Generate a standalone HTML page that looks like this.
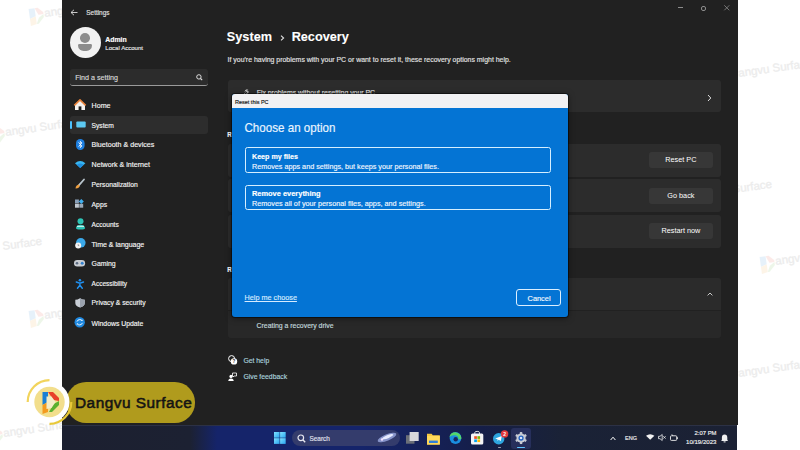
<!DOCTYPE html>
<html><head><meta charset="utf-8">
<style>
*{margin:0;padding:0;box-sizing:border-box}
html,body{width:800px;height:450px;overflow:hidden;background:#fff;font-family:"Liberation Sans",sans-serif;position:relative}
.a{position:absolute}
.t{position:absolute;white-space:nowrap;line-height:1;-webkit-text-stroke:0.15px currentColor}
.btn{position:absolute;background:#373737;border-radius:3px;color:#fff;font-size:7.3px;text-align:center}
svg{overflow:visible}
</style></head><body>
<div class="a" style="left:30px;top:7.699999999999999px;width:110px;height:20px;transform:rotate(-8deg);transform-origin:0 11px"><svg class="a" style="left:0;top:0" width="14" height="18" viewBox="0 0 14 18" opacity="0.1"><path d="M0 1L6 1L6 9L0 11Z" fill="#1a7fd4"/><path d="M6 1L9 1L14 6L14 8L9 8Z" fill="#e8402a"/><path d="M14 8L14 11L8 17L6 17L9 11Z" fill="#5ab030"/><path d="M0 11L6 9L6 17L0 18Z" fill="#f39a1e"/></svg><div class="t" style="left:15px;top:1.5px;font-size:11.5px;color:#ececec;-webkit-text-stroke:0.3px #ececec">angvu Surface</div></div>
<div class="a" style="left:-9px;top:126.80000000000001px;width:110px;height:20px;transform:rotate(-8deg);transform-origin:0 11px"><svg class="a" style="left:0;top:0" width="14" height="18" viewBox="0 0 14 18" opacity="0.1"><path d="M0 1L6 1L6 9L0 11Z" fill="#1a7fd4"/><path d="M6 1L9 1L14 6L14 8L9 8Z" fill="#e8402a"/><path d="M14 8L14 11L8 17L6 17L9 11Z" fill="#5ab030"/><path d="M0 11L6 9L6 17L0 18Z" fill="#f39a1e"/></svg><div class="t" style="left:15px;top:1.5px;font-size:11.5px;color:#ececec;-webkit-text-stroke:0.3px #ececec">angvu Surface</div></div>
<div class="a" style="left:-45.6px;top:245.60000000000002px;width:110px;height:20px;transform:rotate(-8deg);transform-origin:0 11px"><svg class="a" style="left:0;top:0" width="14" height="18" viewBox="0 0 14 18" opacity="0.1"><path d="M0 1L6 1L6 9L0 11Z" fill="#1a7fd4"/><path d="M6 1L9 1L14 6L14 8L9 8Z" fill="#e8402a"/><path d="M14 8L14 11L8 17L6 17L9 11Z" fill="#5ab030"/><path d="M0 11L6 9L6 17L0 18Z" fill="#f39a1e"/></svg><div class="t" style="left:15px;top:1.5px;font-size:11.5px;color:#ececec;-webkit-text-stroke:0.3px #ececec">angvu Surface</div></div>
<div class="a" style="left:30px;top:310px;width:110px;height:20px;transform:rotate(-8deg);transform-origin:0 11px"><svg class="a" style="left:0;top:0" width="14" height="18" viewBox="0 0 14 18" opacity="0.1"><path d="M0 1L6 1L6 9L0 11Z" fill="#1a7fd4"/><path d="M6 1L9 1L14 6L14 8L9 8Z" fill="#e8402a"/><path d="M14 8L14 11L8 17L6 17L9 11Z" fill="#5ab030"/><path d="M0 11L6 9L6 17L0 18Z" fill="#f39a1e"/></svg><div class="t" style="left:15px;top:1.5px;font-size:11.5px;color:#ececec;-webkit-text-stroke:0.3px #ececec">angvu Surface</div></div>
<div class="a" style="left:-11px;top:428px;width:110px;height:20px;transform:rotate(-8deg);transform-origin:0 11px"><svg class="a" style="left:0;top:0" width="14" height="18" viewBox="0 0 14 18" opacity="0.1"><path d="M0 1L6 1L6 9L0 11Z" fill="#1a7fd4"/><path d="M6 1L9 1L14 6L14 8L9 8Z" fill="#e8402a"/><path d="M14 8L14 11L8 17L6 17L9 11Z" fill="#5ab030"/><path d="M0 11L6 9L6 17L0 18Z" fill="#f39a1e"/></svg><div class="t" style="left:15px;top:1.5px;font-size:11.5px;color:#ececec;-webkit-text-stroke:0.3px #ececec">angvu Surface</div></div>
<div class="a" style="left:724px;top:67.7px;width:110px;height:20px;transform:rotate(-8deg);transform-origin:0 11px"><svg class="a" style="left:0;top:0" width="14" height="18" viewBox="0 0 14 18" opacity="0.1"><path d="M0 1L6 1L6 9L0 11Z" fill="#1a7fd4"/><path d="M6 1L9 1L14 6L14 8L9 8Z" fill="#e8402a"/><path d="M14 8L14 11L8 17L6 17L9 11Z" fill="#5ab030"/><path d="M0 11L6 9L6 17L0 18Z" fill="#f39a1e"/></svg><div class="t" style="left:15px;top:1.5px;font-size:11.5px;color:#ececec;-webkit-text-stroke:0.3px #ececec">angvu Surface</div></div>
<div class="a" style="left:684px;top:189.2px;width:110px;height:20px;transform:rotate(-8deg);transform-origin:0 11px"><svg class="a" style="left:0;top:0" width="14" height="18" viewBox="0 0 14 18" opacity="0.1"><path d="M0 1L6 1L6 9L0 11Z" fill="#1a7fd4"/><path d="M6 1L9 1L14 6L14 8L9 8Z" fill="#e8402a"/><path d="M14 8L14 11L8 17L6 17L9 11Z" fill="#5ab030"/><path d="M0 11L6 9L6 17L0 18Z" fill="#f39a1e"/></svg><div class="t" style="left:15px;top:1.5px;font-size:11.5px;color:#ececec;-webkit-text-stroke:0.3px #ececec">angvu Surface</div></div>
<div class="a" style="left:761px;top:255.60000000000002px;width:110px;height:20px;transform:rotate(-8deg);transform-origin:0 11px"><svg class="a" style="left:0;top:0" width="14" height="18" viewBox="0 0 14 18" opacity="0.1"><path d="M0 1L6 1L6 9L0 11Z" fill="#1a7fd4"/><path d="M6 1L9 1L14 6L14 8L9 8Z" fill="#e8402a"/><path d="M14 8L14 11L8 17L6 17L9 11Z" fill="#5ab030"/><path d="M0 11L6 9L6 17L0 18Z" fill="#f39a1e"/></svg><div class="t" style="left:15px;top:1.5px;font-size:11.5px;color:#ececec;-webkit-text-stroke:0.3px #ececec">angvu Surface</div></div>
<div class="a" style="left:724px;top:368px;width:110px;height:20px;transform:rotate(-8deg);transform-origin:0 11px"><svg class="a" style="left:0;top:0" width="14" height="18" viewBox="0 0 14 18" opacity="0.1"><path d="M0 1L6 1L6 9L0 11Z" fill="#1a7fd4"/><path d="M6 1L9 1L14 6L14 8L9 8Z" fill="#e8402a"/><path d="M14 8L14 11L8 17L6 17L9 11Z" fill="#5ab030"/><path d="M0 11L6 9L6 17L0 18Z" fill="#f39a1e"/></svg><div class="t" style="left:15px;top:1.5px;font-size:11.5px;color:#ececec;-webkit-text-stroke:0.3px #ececec">angvu Surface</div></div>
<div class="a" style="left:62px;top:0px;width:676.00px;height:425.00px;background:#212121"></div>
<svg class="a" style="left:70px;top:9px" width="8" height="7" viewBox="0 0 8 7"><path d="M7.5 3.5H1M4 0.8L1 3.5L4 6.2" stroke="#ddd" stroke-width="0.9" fill="none"/></svg>
<div class="t" style="left:86.32px;top:9.68px;font-size:6.4px;color:#e0e0e0;font-weight:normal;">Settings</div>
<div class="a" style="left:678.2px;top:7.3px;width:5.20px;height:0.90px;background:#8c8c8c"></div>
<div class="a" style="left:700.8px;top:5.5px;width:5.20px;height:5.20px;border:1.2px solid #8c8c8c;border-radius:2px"></div>
<svg class="a" style="left:723.6px;top:5.4px" width="5.6" height="5.6" viewBox="0 0 5.6 5.6"><path d="M0.3 0.3L5.3 5.3M5.3 0.3L0.3 5.3" stroke="#8c8c8c" stroke-width="0.8"/></svg>
<div class="a" style="left:69.7px;top:27.3px;width:31.00px;height:31.00px;background:#f2f2f2;border-radius:50%"></div>
<div class="a" style="left:80.2px;top:33.2px;width:10.00px;height:9.50px;background:#8c8c8c;border-radius:50%"></div>
<div class="a" style="left:78px;top:44px;width:14.40px;height:6.80px;background:#8c8c8c;border-radius:2px 2px 8px 8px"></div>
<div class="t" style="left:105.29px;top:36.56px;font-size:6.9px;color:#fff;font-weight:bold;">Admin</div>
<div class="t" style="left:105.34px;top:45.28px;font-size:6.05px;color:#e6e6e6;font-weight:normal;">Local Account</div>
<div class="a" style="left:70px;top:69px;width:138.40px;height:17.00px;background:#2c2c2c;border-radius:3px;border-bottom:1px solid #9a9a9a"></div>
<div class="t" style="left:75.17px;top:74.95px;font-size:7.15px;color:#d8d8d8;font-weight:normal;">Find a setting</div>
<svg class="a" style="left:196px;top:74px" width="7" height="7" viewBox="0 0 7 7"><circle cx="2.9" cy="2.9" r="2.2" stroke="#e0e0e0" stroke-width="1" fill="none"/><path d="M4.5 4.5L6.2 6.2" stroke="#e0e0e0" stroke-width="1.1"/></svg>
<div class="a" style="left:70px;top:116px;width:138.40px;height:18.00px;background:#2d2d2d;border-radius:3px"></div>
<div class="a" style="left:70px;top:121px;width:2.00px;height:8.00px;background:#4cc2ff;border-radius:1px"></div>
<div class="t" style="left:91.57px;top:102.99px;font-size:7.1px;color:#f4f4f4;font-weight:normal;">Home</div>
<div class="t" style="left:91.60px;top:122.75px;font-size:6.67px;color:#f4f4f4;font-weight:normal;">System</div>
<div class="t" style="left:91.57px;top:142.19px;font-size:7.1px;color:#f4f4f4;font-weight:normal;">Bluetooth &amp; devices</div>
<div class="t" style="left:91.57px;top:161.89px;font-size:7.1px;color:#f4f4f4;font-weight:normal;">Network &amp; internet</div>
<div class="t" style="left:91.59px;top:182.09px;font-size:6.75px;color:#f4f4f4;font-weight:normal;">Personalization</div>
<div class="t" style="left:91.59px;top:201.64px;font-size:6.8px;color:#f4f4f4;font-weight:normal;">Apps</div>
<div class="t" style="left:91.60px;top:221.91px;font-size:6.6px;color:#f4f4f4;font-weight:normal;">Accounts</div>
<div class="t" style="left:91.58px;top:241.47px;font-size:7.0px;color:#f4f4f4;font-weight:normal;">Time &amp; language</div>
<div class="t" style="left:91.59px;top:261.16px;font-size:6.9px;color:#f4f4f4;font-weight:normal;">Gaming</div>
<div class="t" style="left:91.61px;top:281.00px;font-size:6.5px;color:#f4f4f4;font-weight:normal;">Accessibility</div>
<div class="t" style="left:91.59px;top:300.34px;font-size:6.8px;color:#f4f4f4;font-weight:normal;">Privacy &amp; security</div>
<div class="t" style="left:91.59px;top:320.60px;font-size:6.85px;color:#f4f4f4;font-weight:normal;">Windows Update</div>
<svg class="a" style="left:74px;top:98.5px" width="12" height="12" viewBox="0 0 12 12"><path d="M1 6L6 1.2L11 6V11H1Z" fill="#f6f2ee"/><path d="M0.3 6.3L6 0.8L11.7 6.3" stroke="#e8823a" stroke-width="1.6" fill="none" stroke-linejoin="round"/><rect x="4.6" y="7.4" width="2.8" height="3.6" fill="#1c1c1c"/></svg>
<svg class="a" style="left:75.5px;top:120.5px" width="10" height="8" viewBox="0 0 10 8"><rect x="0.3" y="0.5" width="9.4" height="6" rx="1" fill="#5cc8f0"/></svg>
<svg class="a" style="left:75.8px;top:139.2px" width="8.6" height="11" viewBox="0 0 8.6 11"><rect x="0" y="0" width="8.6" height="11" rx="4.2" fill="#1e7fe0"/><path d="M2.5 3.5L6 7L4.3 8.7V2.3L6 4L2.5 7.5" stroke="#fff" stroke-width="0.8" fill="none"/></svg>
<svg class="a" style="left:74.8px;top:161px" width="10.4" height="7.2" viewBox="0 0 10.4 7.2"><path d="M5.2 7L0 2.2Q5.2 -2 10.4 2.2Z" fill="#38b6f2"/><path d="M5.2 7L1.8 3.8Q5.2 1.2 8.6 3.8Z" fill="#1f8fe0"/></svg>
<svg class="a" style="left:74.8px;top:179.3px" width="9.5" height="10" viewBox="0 0 9.5 10"><path d="M9 0.5L3.8 6.3" stroke="#b8c4cc" stroke-width="1.8" stroke-linecap="round"/><path d="M3.8 5.6Q1 6 0.5 9.5Q3.5 9.8 4.8 7.2Z" fill="#f0a040"/></svg>
<svg class="a" style="left:75.3px;top:199px" width="9" height="9" viewBox="0 0 9 9"><rect x="0" y="0.5" width="3.9" height="3.9" fill="#8aa0b8"/><rect x="0" y="4.8" width="3.9" height="3.9" fill="#c0c8d0"/><rect x="4.3" y="4.8" width="3.9" height="3.9" fill="#9aa8b8"/><path d="M6.3 0L8.8 2.5L6.3 5L3.8 2.5Z" fill="#40b0f0"/></svg>
<svg class="a" style="left:75.9px;top:217.7px" width="9" height="11.5" viewBox="0 0 9 11.5"><circle cx="4.5" cy="3.2" r="3" fill="#2ec4b6"/><path d="M0 10.3Q0 6.8 4.5 6.8Q9 6.8 9 10.3Q9 11.5 4.5 11.5Q0 11.5 0 10.3Z" fill="#2ec4b6"/><rect x="1" y="7.8" width="7" height="1" fill="#fff" opacity=".9"/></svg>
<svg class="a" style="left:74.8px;top:237.8px" width="10.7" height="10.6" viewBox="0 0 10.7 10.6"><circle cx="5.8" cy="4.8" r="4.8" fill="#3aa8e8"/><circle cx="3.2" cy="7.6" r="3" fill="#f4f4f4"/><path d="M3.2 6.2V7.6H4.2" stroke="#666" stroke-width="0.6" fill="none"/></svg>
<svg class="a" style="left:74.4px;top:260.3px" width="11.1" height="6.5" viewBox="0 0 11.1 6.5"><rect x="0" y="0" width="11.1" height="6.5" rx="3.2" fill="#c8ccd2"/><circle cx="3" cy="3.2" r="1.3" fill="#5a6a80"/><circle cx="8.2" cy="3.2" r="1.5" fill="#2f80d0"/></svg>
<svg class="a" style="left:75.9px;top:278.6px" width="7.8" height="9.3" viewBox="0 0 7.8 9.3"><circle cx="3.9" cy="1.3" r="1.3" fill="#2090f0"/><path d="M0.3 3L3.9 4.3L7.5 3M3.9 4.3V6.2L1.5 9.2M3.9 6.2L6.3 9.2" stroke="#2090f0" stroke-width="1.5" fill="none" stroke-linecap="round"/></svg>
<svg class="a" style="left:74.7px;top:297.5px" width="10.1" height="9.7" viewBox="0 0 10.1 9.7"><path d="M5 0.3Q7.5 1.8 9.8 1.8V5Q9.8 8.2 5 9.6Q0.3 8.2 0.3 5V1.8Q2.5 1.8 5 0.3Z" fill="#c9ced6"/><path d="M5 0.3Q7.5 1.8 9.8 1.8V5Q9.8 8.2 5 9.6Z" fill="#9aa2ae"/></svg>
<svg class="a" style="left:74.3px;top:317px" width="11.4" height="10.5" viewBox="0 0 11.4 10.5"><circle cx="5.7" cy="5.25" r="5.2" fill="#1e88e0"/><path d="M3 4.6Q3.6 2.6 5.8 2.6Q7.2 2.6 8 3.5M8.4 5.9Q7.8 7.9 5.6 7.9Q4.2 7.9 3.4 7" stroke="#fff" stroke-width="0.9" fill="none"/><path d="M8.6 2.4V4H7Z M2.8 8.1V6.5H4.4Z" fill="#fff"/></svg>
<div class="t" style="left:226.84px;top:31.45px;font-size:12.7px;color:#fff;font-weight:bold;-webkit-text-stroke:0.1px #fff">System</div>
<svg class="a" style="left:279.8px;top:34.8px" width="5" height="6" viewBox="0 0 5 6"><path d="M1 0.6L3.6 3L1 5.4" stroke="#e0e0e0" stroke-width="1.1" fill="none"/></svg>
<div class="t" style="left:291.64px;top:31.45px;font-size:12.7px;color:#fff;font-weight:bold;-webkit-text-stroke:0.1px #fff">Recovery</div>
<div class="t" style="left:227.58px;top:57.23px;font-size:6.94px;color:#e2e2e2;font-weight:normal;">If you're having problems with your PC or want to reset it, these recovery options might help.</div>
<div class="a" style="left:228px;top:80.4px;width:492.70px;height:32.10px;background:#2c2c2c;border-radius:3px"></div>
<svg class="a" style="left:241px;top:88.5px" width="8" height="8" viewBox="0 0 8 8"><path d="M1 7L4.3 3.7M4 2.5Q4.3 0.6 6.5 0.8L5.4 2L6 3L7.2 2.5Q7.4 4.6 5.2 4.6" stroke="#ddd" stroke-width="0.9" fill="none"/></svg>
<div class="t" style="left:256.69px;top:90.26px;font-size:6.9px;color:#e6e6e6;font-weight:normal;">Fix problems without resetting your PC</div>
<svg class="a" style="left:706.5px;top:93.5px" width="5" height="8" viewBox="0 0 5 8"><path d="M1 1L3.8 4L1 7" stroke="#ddd" stroke-width="1" fill="none"/></svg>
<div class="t" style="left:227.32px;top:132.48px;font-size:6.4px;color:#fff;font-weight:bold;">Recovery options</div>
<div class="a" style="left:228px;top:143.7px;width:492.70px;height:33.00px;background:#2c2c2c;border-radius:3px"></div>
<div class="btn" style="left:648.9px;top:151.7px;width:64.0px;height:15.9px;line-height:15.9px">Reset PC</div>
<div class="a" style="left:228px;top:179.1px;width:492.70px;height:33.00px;background:#2c2c2c;border-radius:3px"></div>
<div class="btn" style="left:648.9px;top:187.7px;width:64.0px;height:15.9px;line-height:15.9px">Go back</div>
<div class="a" style="left:228px;top:214.6px;width:492.70px;height:33.00px;background:#2c2c2c;border-radius:3px"></div>
<div class="btn" style="left:648.9px;top:223.1px;width:64.0px;height:15.9px;line-height:15.9px">Restart now</div>
<div class="t" style="left:227.32px;top:266.68px;font-size:6.4px;color:#fff;font-weight:bold;">Related support</div>
<div class="a" style="left:228px;top:277.7px;width:492.70px;height:32.30px;background:#2b2b2b;border-radius:3px 3px 0 0"></div>
<div class="a" style="left:228px;top:311px;width:492.70px;height:27.30px;background:#282828;border-radius:0 0 3px 3px"></div>
<svg class="a" style="left:706.5px;top:291.5px" width="6" height="4" viewBox="0 0 6 4"><path d="M0.6 3.4L3 1L5.4 3.4" stroke="#ddd" stroke-width="0.9" fill="none"/></svg>
<div class="t" style="left:256.59px;top:322.56px;font-size:6.9px;color:#c4d8de;font-weight:normal;">Creating a recovery drive</div>
<svg class="a" style="left:227.5px;top:354.5px" width="9" height="10" viewBox="0 0 9 10"><circle cx="3.6" cy="3.6" r="3" stroke="#fff" stroke-width="1" fill="none"/><circle cx="6" cy="6.4" r="3.2" fill="#fff"/><text x="6" y="8.2" font-size="4.6" font-weight="bold" text-anchor="middle" fill="#202020" font-family="Liberation Sans">?</text></svg>
<svg class="a" style="left:227.5px;top:371.5px" width="9" height="9" viewBox="0 0 9 9"><circle cx="3" cy="4.4" r="1.6" fill="#fff"/><path d="M0.3 9Q0.3 6.5 3 6.5Q5.7 6.5 5.7 9Z" fill="#fff"/><path d="M4.5 1H8.5V4H6L5 5V4H4.5Z" stroke="#fff" stroke-width="0.8" fill="none"/></svg>
<div class="t" style="left:243.39px;top:357.60px;font-size:6.85px;color:#a9d2de;font-weight:normal;">Get help</div>
<div class="t" style="left:243.39px;top:373.60px;font-size:6.85px;color:#a9d2de;font-weight:normal;">Give feedback</div>
<div class="a" style="left:231.7px;top:94.3px;width:336.50px;height:223.20px;background:#0474d4;border-radius:3px;box-shadow:0 0 0 1px rgba(0,0,0,.45),0 1px 6px rgba(0,0,0,.5)"></div>
<div class="a" style="left:231.7px;top:94.3px;width:336.50px;height:14.00px;background:#f1f1f3;border-radius:3px 3px 0 0"></div>
<div class="t" style="left:234.97px;top:100.04px;font-size:5.5px;color:#111;font-weight:normal;">Reset this PC</div>
<div class="t" style="left:244.50px;top:121.68px;font-size:11.6px;color:#eaf4ff;font-weight:normal;transform:scaleY(1.08);transform-origin:0 85%">Choose an option</div>
<div class="a" style="left:245px;top:147.3px;width:306.20px;height:26.00px;border:1.6px solid #d6efff;border-radius:2.5px"></div>
<div class="t" style="left:251.97px;top:153.65px;font-size:7.15px;color:#fff;font-weight:bold;">Keep my files</div>
<div class="t" style="left:251.97px;top:163.19px;font-size:7.22px;color:#f0f6ff;font-weight:normal;">Removes apps and settings, but keeps your personal files.</div>
<div class="a" style="left:245px;top:185.1px;width:306.20px;height:25.40px;border:1.6px solid #d6efff;border-radius:2.5px"></div>
<div class="t" style="left:251.95px;top:190.49px;font-size:7.45px;color:#fff;font-weight:bold;">Remove everything</div>
<div class="t" style="left:251.97px;top:200.26px;font-size:7.25px;color:#f0f6ff;font-weight:normal;">Removes all of your personal files, apps, and settings.</div>
<div class="t" style="left:244.56px;top:294.46px;font-size:7.25px;color:#d6ebff;font-weight:normal;text-decoration:underline">Help me choose</div>
<div class="a" style="left:516px;top:289.2px;width:45.20px;height:16.60px;border:1.6px solid #dcefff;border-radius:3px"></div>
<div class="t" style="left:527.56px;top:294.64px;font-size:7.4px;color:#f4f9ff;font-weight:normal;">Cancel</div>
<div class="a" style="left:62px;top:425px;width:675.00px;height:25.00px;background:linear-gradient(90deg,#1c2030 0px,#1c2132 128px,#15246a 155px,#15246a 300px,#151e48 420px,#1a2236 500px,#1b2134 676px);border-top:1px solid #2c3145"></div>
<svg class="a" style="left:273.7px;top:432.3px" width="11.7" height="11.9" viewBox="0 0 11.7 11.9"><defs><linearGradient id="wg" x1="0" y1="0" x2="1" y2="1"><stop offset="0" stop-color="#7fe0ff"/><stop offset="1" stop-color="#2aa6f0"/></linearGradient></defs><rect x="0" y="0" width="5.6" height="5.7" fill="url(#wg)"/><rect x="6.1" y="0" width="5.6" height="5.7" fill="url(#wg)"/><rect x="0" y="6.2" width="5.6" height="5.7" fill="url(#wg)"/><rect x="6.1" y="6.2" width="5.6" height="5.7" fill="url(#wg)"/></svg>
<div class="a" style="left:291.5px;top:429.6px;width:108.50px;height:16.30px;background:#343c6c;border-radius:9px"></div>
<svg class="a" style="left:296.8px;top:433.8px" width="9" height="9" viewBox="0 0 9 9"><circle cx="3.8" cy="3.8" r="2.8" stroke="#e8e8f0" stroke-width="1.2" fill="none"/><path d="M5.8 5.8L8.2 8.2" stroke="#e8e8f0" stroke-width="1.4"/></svg>
<div class="t" style="left:309.52px;top:435.98px;font-size:6.4px;color:#e0e2ee;font-weight:normal;">Search</div>
<svg class="a" style="left:375px;top:431px" width="24" height="13" viewBox="0 0 24 13"><ellipse cx="12" cy="6.5" rx="10" ry="3.2" transform="rotate(-22 12 6.5)" fill="#9aa8e0" opacity=".8"/><ellipse cx="13" cy="6" rx="6" ry="1.6" transform="rotate(-22 12 6.5)" fill="#e8ecff"/><circle cx="7" cy="8.5" r="1.2" fill="#f0e0ff"/></svg>
<svg class="a" style="left:405.9px;top:431.9px" width="12.7" height="11.7" viewBox="0 0 12.7 11.7"><rect x="0" y="3.2" width="8.5" height="8.5" fill="#6b6f78"/><rect x="3.6" y="0" width="9.1" height="9" fill="#d8d8dc"/></svg>
<svg class="a" style="left:427.4px;top:432.6px" width="12.8" height="11.6" viewBox="0 0 12.8 11.6"><path d="M0 0.8H4.6L5.8 2.2H12.8V11.6H0Z" fill="#f5c842"/><rect x="0" y="3" width="12.8" height="8.6" fill="#ffd95a"/><rect x="2" y="7.6" width="8.8" height="2.4" fill="#2f7fd8"/></svg>
<svg class="a" style="left:449.3px;top:432.3px" width="13" height="12" viewBox="0 0 13 12"><circle cx="6.5" cy="6" r="5.9" fill="#1a8fe0"/><path d="M12.4 6.4Q12 1 6.5 0.2Q1.2 0.3 0.4 5Q2.5 2.8 6.2 3.3Q9.8 4 9.3 7.3Q12 7.5 12.4 6.4Z" fill="#54d66a"/><circle cx="6.7" cy="7.2" r="2.2" fill="#16275f"/></svg>
<svg class="a" style="left:471.1px;top:430.5px" width="12.3" height="13.5" viewBox="0 0 12.3 13.5"><path d="M3.8 3V1.6Q3.8 0.4 6.15 0.4Q8.5 0.4 8.5 1.6V3" stroke="#f0f0f0" stroke-width="0.9" fill="none"/><rect x="0" y="2.6" width="12.3" height="10.9" rx="1.5" fill="#f4f4f6"/><rect x="3.2" y="5.2" width="2.7" height="2.7" fill="#f25022"/><rect x="6.4" y="5.2" width="2.7" height="2.7" fill="#7fba00"/><rect x="3.2" y="8.4" width="2.7" height="2.7" fill="#00a4ef"/><rect x="6.4" y="8.4" width="2.7" height="2.7" fill="#ffb900"/></svg>
<svg class="a" style="left:493px;top:430px" width="15.5" height="15" viewBox="0 0 15.5 15"><circle cx="5.7" cy="8.7" r="5.7" fill="#2ea6e0"/><path d="M2.2 8.6L8.8 6L7.8 11L5.6 9.8L4.6 10.9L4.5 9.3Z" fill="#fff"/><circle cx="11.6" cy="3.9" r="3.7" fill="#e33a3a"/><text x="11.6" y="5.6" font-size="5" font-family="Liberation Sans" fill="#fff" text-anchor="middle" font-weight="bold">2</text></svg>
<div class="a" style="left:497.5px;top:446.8px;width:3.50px;height:1.00px;background:#9aa0b0;border-radius:1px"></div>
<div class="a" style="left:511.4px;top:427.9px;width:19.20px;height:21.00px;background:#2a3360;border-radius:3px;opacity:.85"></div>
<svg class="a" style="left:514.9px;top:432.2px" width="12.1" height="12.1" viewBox="0 0 12.1 12.1"><g transform="translate(6.05 6.05)"><circle r="4.6" fill="#c8ccd4"/><g fill="#c8ccd4"><rect x="-1.2" y="-6" width="2.4" height="12"/><rect x="-1.2" y="-6" width="2.4" height="12" transform="rotate(60)"/><rect x="-1.2" y="-6" width="2.4" height="12" transform="rotate(120)"/></g><circle r="2.6" fill="#2060c0"/><circle r="1.3" fill="#d8e6ff"/></g></svg>
<div class="a" style="left:516.5px;top:446.8px;width:8.50px;height:1.20px;background:#5fc4ff;border-radius:1px"></div>
<svg class="a" style="left:609.6px;top:435.5px" width="6" height="4.5" viewBox="0 0 6 4.5"><path d="M0.6 4L3 1.2L5.4 4" stroke="#fff" stroke-width="1" fill="none"/></svg>
<div class="t" style="left:625.07px;top:436.44px;font-size:5.5px;color:#f0f0f0;font-weight:normal;">ENG</div>
<svg class="a" style="left:645.9px;top:434.3px" width="8.4" height="5.8" viewBox="0 0 8.4 5.8"><path d="M4.2 5.8L0 1.7Q4.2 -1.4 8.4 1.7Z" fill="#f2f2f2"/></svg>
<svg class="a" style="left:657.8px;top:434px" width="8" height="7" viewBox="0 0 8 7"><path d="M0.5 2.3H2L4.2 0.5V6.5L2 4.7H0.5Z" stroke="#f0f0f0" stroke-width="0.8" fill="none"/><path d="M5.3 2.2L7.6 4.6M7.6 2.2L5.3 4.6" stroke="#f0f0f0" stroke-width="0.8"/></svg>
<svg class="a" style="left:670px;top:434px" width="8" height="7.2" viewBox="0 0 8 7.2"><rect x="0.5" y="1.8" width="6.2" height="4.6" rx="0.8" stroke="#f0f0f0" stroke-width="0.9" fill="none"/><rect x="6.9" y="3.2" width="0.9" height="1.8" fill="#f0f0f0"/><path d="M1.8 0.3L3 2" stroke="#f0f0f0" stroke-width="0.8"/></svg>
<div class="t" style="left:660px;width:56.5px;text-align:right;top:431.11px;font-size:5.9px;color:#f0f0f0">2:07 PM</div>
<div class="t" style="left:660px;width:56.5px;text-align:right;top:439.04px;font-size:6.1px;color:#f0f0f0">10/19/2023</div>
<svg class="a" style="left:720.8px;top:434px" width="7.2" height="8.4" viewBox="0 0 7.2 8.4"><path d="M3.6 0.4Q6.3 0.4 6.3 3.4V5.8L7 7H0.2L0.9 5.8V3.4Q0.9 0.4 3.6 0.4Z" fill="#f0f0f0"/><rect x="2.6" y="7.4" width="2" height="1" fill="#f0f0f0"/></svg>
<div class="a" style="left:66px;top:382.4px;width:128.50px;height:40.20px;background:#b09b1d;border-radius:20.1px"></div>
<div class="t" style="left:74.98px;top:395.06px;font-size:15.4px;color:#141414;font-weight:normal;letter-spacing:0.5px;-webkit-text-stroke:0.55px #141414">Dangvu Surface</div>
<svg class="a" style="left:22px;top:376px" width="56" height="52" viewBox="0 0 56 52"><circle cx="27.5" cy="26" r="20" fill="#fff"/><circle cx="27.5" cy="26" r="15.2" fill="#f2de8c"/><path d="M27.5 4.2A21.8 21.8 0 0 0 5.7 26" stroke="#f2d45c" stroke-width="2.2" fill="none"/><path d="M49.3 26A21.8 21.8 0 0 1 27.5 47.8" stroke="#e8c838" stroke-width="2.2" fill="none"/><path d="M20.5 16L26 16L26 26L20.5 29Z" fill="#1a7fd4"/><path d="M26 16L31 16L37 22L37 25L31.5 24Z" fill="#e8402a"/><path d="M37 25L37 29L30 36L27 36L31.5 28Z" fill="#5ab030"/><path d="M20.5 29L26 26L26 36L20.5 38Z" fill="#f39a1e"/><path d="M24.5 20.5L29.5 20.5L33.5 26L29.5 32L24.5 33Z" fill="#f4ecc8"/></svg>
</body></html>
